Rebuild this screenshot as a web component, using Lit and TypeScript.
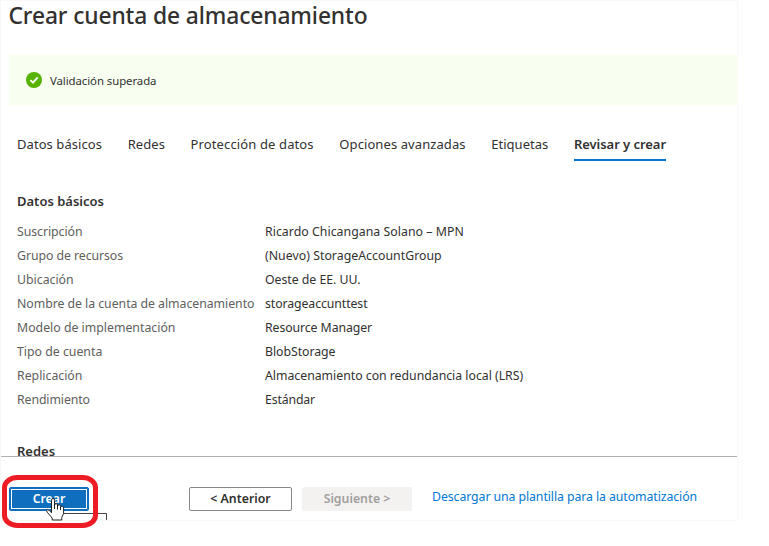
import { LitElement, html, css } from "lit";
import { customElement } from "lit/decorators.js";
import { classMap } from "lit/directives/class-map.js";
import { styleMap } from "lit/directives/style-map.js";

interface Label {
  text: string;
  tracking?: number;
}

const TABS: (Label & { active?: boolean })[] = [
  { text: "Datos básicos", tracking: 0.07 },
  { text: "Redes", tracking: 0.06 },
  { text: "Protección de datos", tracking: 0.13 },
  { text: "Opciones avanzadas", tracking: 0.09 },
  { text: "Etiquetas", tracking: 0.03 },
  { text: "Revisar y crear", tracking: -0.05, active: true },
];

const ROWS: [Label, Label][] = [
  [{ text: "Suscripción", tracking: -0.05 }, { text: "Ricardo Chicangana Solano – MPN", tracking: 0.04 }],
  [{ text: "Grupo de recursos", tracking: -0.06 }, { text: "(Nuevo) StorageAccountGroup", tracking: 0.03 }],
  [{ text: "Ubicación" }, { text: "Oeste de EE. UU.", tracking: -0.03 }],
  [{ text: "Nombre de la cuenta de almacenamiento", tracking: -0.04 }, { text: "storageaccunttest", tracking: -0.09 }],
  [{ text: "Modelo de implementación" }, { text: "Resource Manager", tracking: -0.09 }],
  [{ text: "Tipo de cuenta" }, { text: "BlobStorage", tracking: -0.05 }],
  [{ text: "Replicación" }, { text: "Almacenamiento con redundancia local (LRS)", tracking: -0.02 }],
  [{ text: "Rendimiento", tracking: -0.1 }, { text: "Estándar", tracking: -0.15 }],
];

const spaced = (l: Label) => styleMap({ letterSpacing: `${l.tracking ?? 0}px` });

@customElement("app-root")
export class AppRoot extends LitElement {
  static styles = css`
    :host {
      display: block;
      width: 769px;
      height: 546px;
      overflow: hidden;
      background: #fff;
      color: #323130;
      font-family: "Noto Sans", "Open Sans", sans-serif;
      font-size: 12.3px;
    }
    .panel {
      box-sizing: border-box;
      width: 738px;
      height: 521px;
      border: 1px solid #f8f8f8;
      display: flex;
      flex-direction: column;
    }
    .body {
      height: 455px;
      overflow: hidden;
      flex: none;
    }
    h1 {
      margin: 0 0 0 7.5px;
      height: 54px;
      font-size: 22.8px;
      line-height: 29px;
      font-weight: 500;
      letter-spacing: -0.11px;
      white-space: nowrap;
    }
    .banner {
      display: flex;
      align-items: center;
      gap: 8px;
      height: 50px;
      box-sizing: border-box;
      margin-left: 8px;
      padding-left: 17px;
      background: #f8fff0;
      font-size: 11.4px;
      letter-spacing: -0.07px;
    }
    .banner svg {
      display: block;
    }
    .tabs {
      display: flex;
      justify-content: space-between;
      width: 649px;
      margin: 26px 0 0 16px;
      font-size: 13px;
      line-height: 26px;
      white-space: nowrap;
    }
    .tab {
      height: 28px;
      border-bottom: 2px solid transparent;
    }
    .active {
      font-weight: 600;
      border-color: #0078d4;
    }
    h2 {
      margin: 0 0 0 16px;
      font-size: 13px;
      line-height: 20px;
      font-weight: 600;
    }
    .first {
      margin-top: 30px;
    }
    .second {
      margin-top: 29px;
    }
    .rows {
      display: grid;
      grid-template-columns: 248px 1fr;
      grid-auto-rows: 24px;
      line-height: 24px;
      margin: 9px 0 0 16px;
      white-space: nowrap;
    }
    .key {
      color: #605e5c;
    }
    .footer {
      flex: 1;
      display: flex;
      align-items: flex-start;
      border-top: 1px solid #b3b1b0;
      padding: 30px 0 0 8px;
      white-space: nowrap;
    }
    .btn {
      box-sizing: border-box;
      height: 24px;
      border: 1px solid #8a8886;
      border-radius: 2px;
      display: flex;
      align-items: center;
      justify-content: center;
      line-height: 20px;
      padding-bottom: 1px;
      font-weight: 600;
    }
    .primary {
      position: relative;
      width: 80px;
      border-color: #106ebe;
      background: #106ebe;
      color: #fff;
      box-shadow: inset 0 0 0 1px #106ebe, inset 0 0 0 2px #fff;
    }
    .back {
      width: 103px;
      margin-left: 100px;
    }
    .next {
      width: 110px;
      margin-left: 10px;
      background: #f3f2f1;
      border-color: #f3f2f1;
      color: #a19f9d;
    }
    .link {
      margin-left: 20px;
      line-height: 20px;
      color: #0078d4;
      letter-spacing: -0.08px;
    }
    .overlay {
      position: absolute;
      left: -10px;
      top: -17px;
    }
  `;

  render() {
    return html`
      <div class="panel">
        <div class="body">
          <h1>Crear cuenta de almacenamiento</h1>
          <div class="banner">
            <svg width="16" height="16" viewBox="0 0 16 16">
              <circle cx="8" cy="8" r="8" fill="#57b300" />
              <path d="M4.4 8.1 7 10.6 11.7 5.3" fill="none" stroke="#fff" stroke-width="1.9" />
            </svg>
            <span>Validación superada</span>
          </div>
          <div class="tabs">
            ${TABS.map(
              (t) => html`<div class=${classMap({ tab: true, active: !!t.active })} style=${spaced(t)}>${t.text}</div>`
            )}
          </div>
          <h2 class="first">Datos básicos</h2>
          <div class="rows">
            ${ROWS.map(
              ([k, v]) => html`<div class="key" style=${spaced(k)}>${k.text}</div>
                <div style=${spaced(v)}>${v.text}</div>`
            )}
          </div>
          <h2 class="second">Redes</h2>
        </div>
        <div class="footer">
          <div class="btn primary">
            <span>Crear</span>
            <svg class="overlay" width="112" height="60" viewBox="0 471 112 60">
              <path d="M62.5 513.5H106.5V520" fill="none" stroke="#444" />
              <path
                d="M51.5 508V500.3Q51.5 498.4 53 498.4T54.5 500.3V505.2Q54.7 503.5 56.1 503.6T57.6 505.1V506Q57.9 504.6 59.2 504.8T60.6 506.4V507.2Q61 506 62.2 506.2T63.6 508V513.5L61.8 517.2V520H52.2V518L47.2 512.2Q46 510.3 47.3 509.7T51.5 512.8Z"
                fill="#fff"
                stroke="#222"
              />
              <path d="M54.5 504V509M57.5 505.5V509.5M60.5 507V510" fill="none" stroke="#222" />
              <rect x="4.5" y="477.5" width="91" height="48" rx="13" ry="10" fill="none" stroke="#ed1c24" stroke-width="5" />
            </svg>
          </div>
          <div class="btn back">&lt; Anterior</div>
          <div class="btn next">Siguiente &gt;</div>
          <div class="link">Descargar una plantilla para la automatización</div>
        </div>
      </div>
    `;
  }
}
